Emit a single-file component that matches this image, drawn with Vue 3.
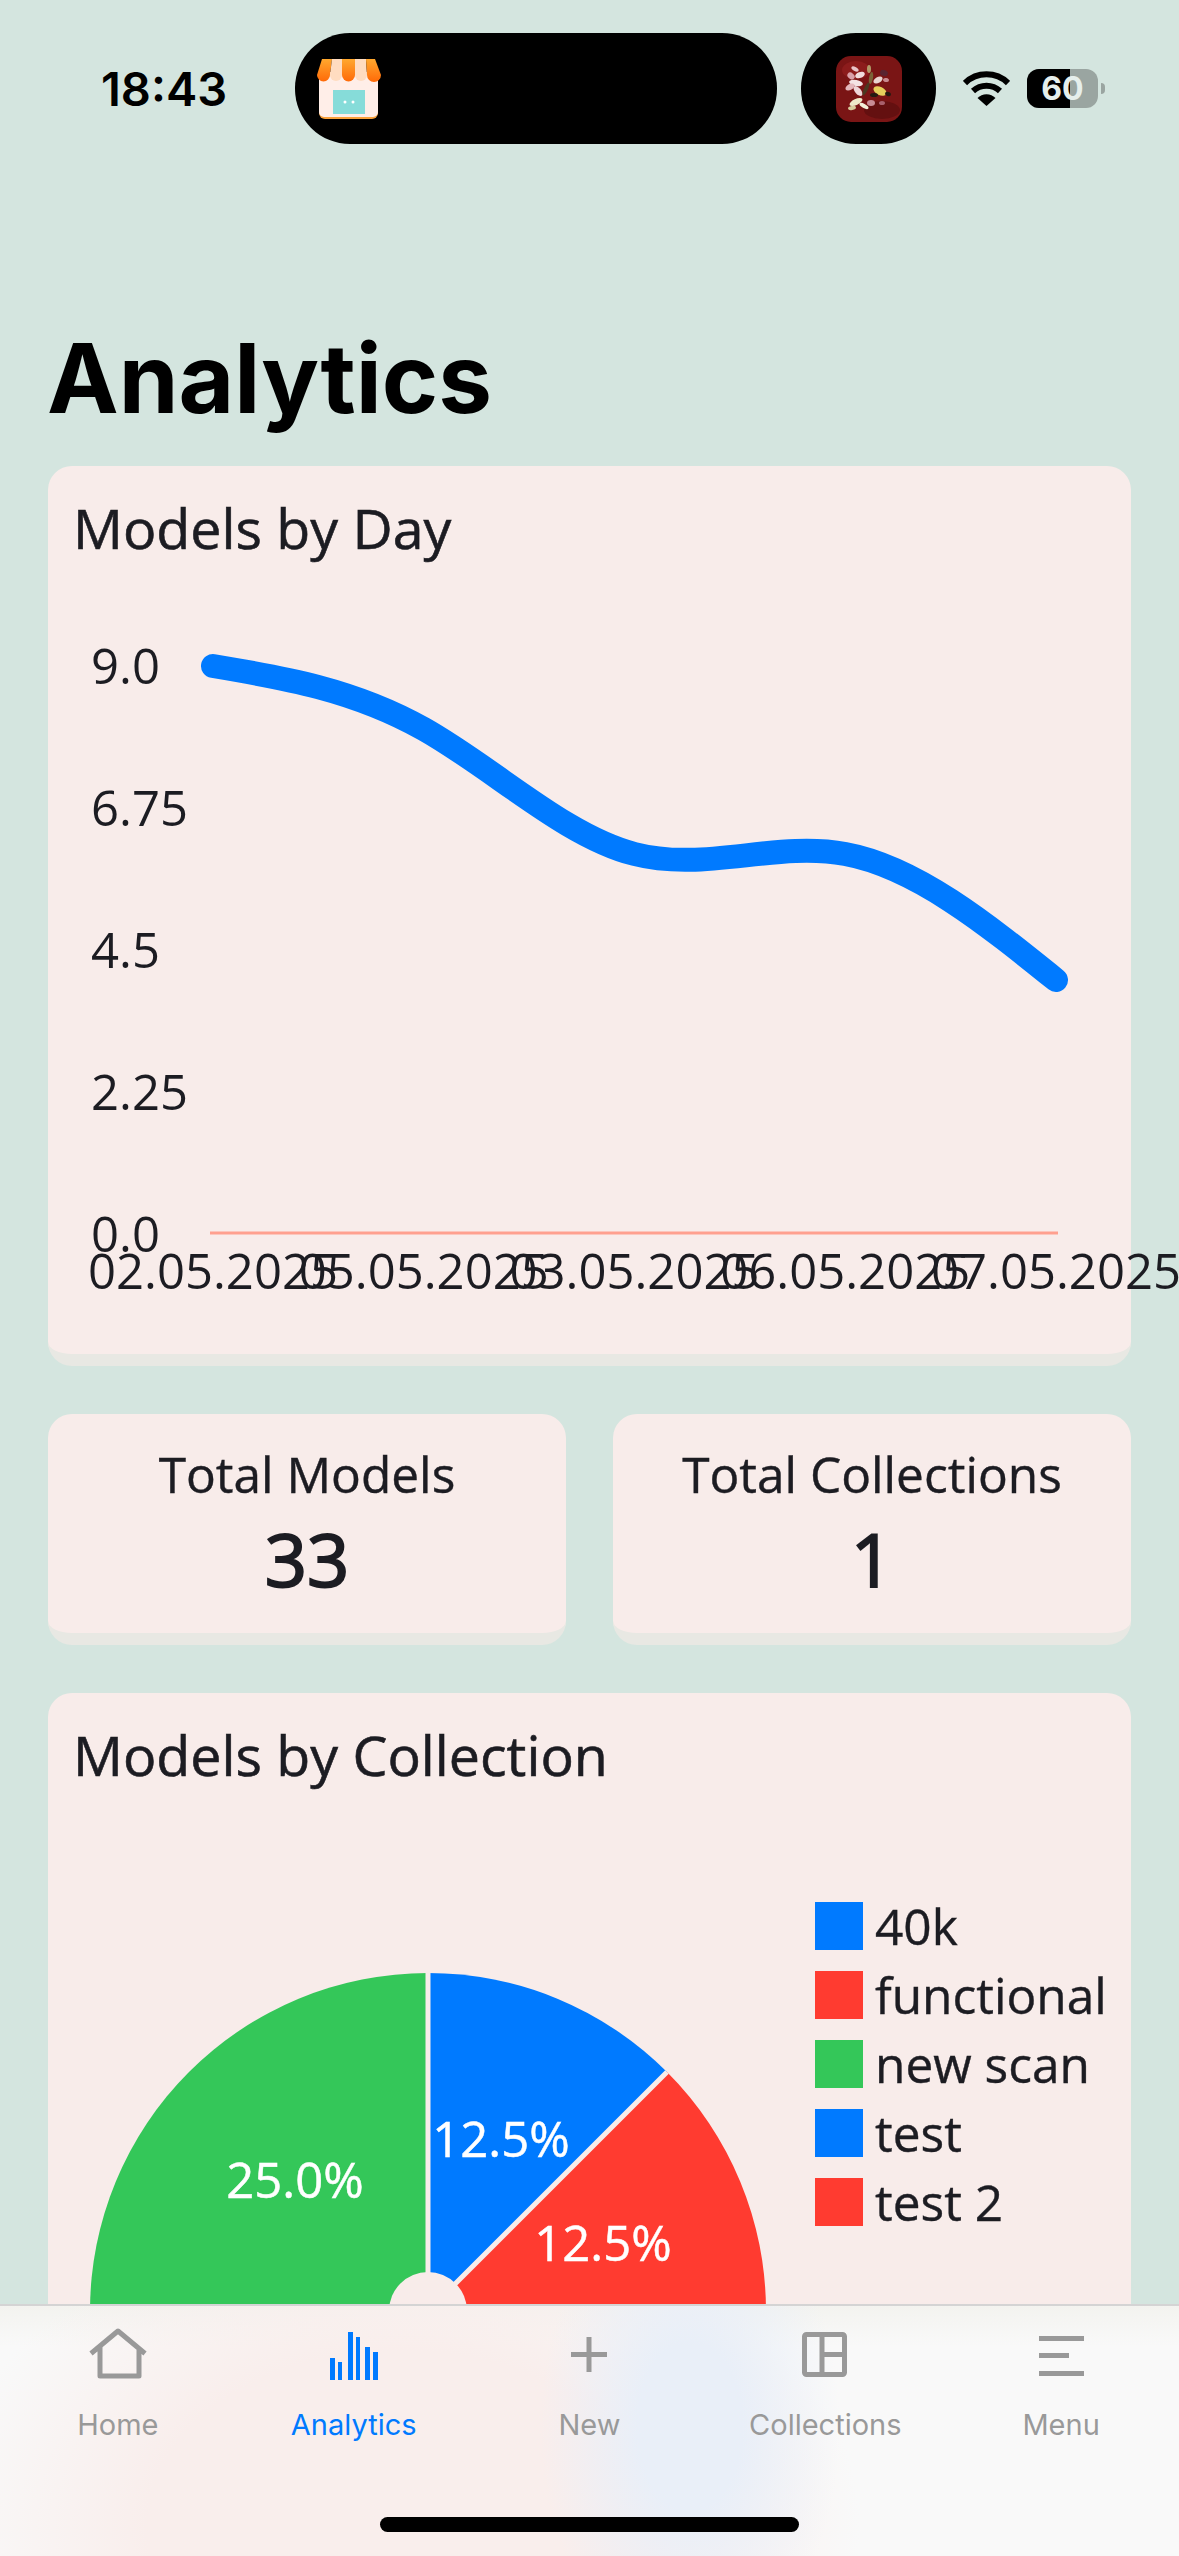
<template>
  <div class="screen">
    <div class="status-bar">
      <span class="time">18:43</span>
      <div class="island island-main">
        <svg class="shop-icon" width="65" height="62" viewBox="0 0 65 62">
          <defs>
            <linearGradient id="awning" x1="0" y1="0" x2="0" y2="1">
              <stop offset="0" stop-color="#ffa82e" />
              <stop offset="1" stop-color="#ff6a08" />
            </linearGradient>
          </defs>
          <rect x="3" y="14" width="59" height="47" rx="6" fill="#f9a13a" />
          <rect x="3" y="14" width="59" height="45" rx="5" fill="#ffeee8" />
          <rect x="17" y="32" width="32" height="24" fill="#86dcd9" />
          <circle cx="29" cy="44" r="1.500" fill="#fff" />
          <circle cx="37" cy="44" r="1.500" fill="#fff" />
          <path d="M6 1H16L14 17A6.500 6.500 0 0 1 1 17z" fill="url(#awning)" />
          <path d="M16 1H26V17A6 6 0 0 1 14 17z" fill="#ffdcc0" />
          <path d="M26 1H39V17A6.500 6.500 0 0 1 26 17z" fill="url(#awning)" />
          <path d="M39 1H50L51 17A6 6 0 0 1 39 17z" fill="#ffdcc0" />
          <path d="M50 1H59L65 17A7 7 0 0 1 51 17z" fill="url(#awning)" />
        </svg>
      </div>
      <div class="island island-side">
        <svg class="album-art" width="66" height="66" viewBox="0 0 66 66">
          <rect width="66" height="66" rx="15" fill="#7a1515" />
          <ellipse cx="20" cy="14" rx="14" ry="9" fill="#8c1c1c" />
          <ellipse cx="46" cy="54" rx="18" ry="9" fill="#641010" />
          <ellipse v-for="(f, i) in petals" :key="i" :cx="f[0]" :cy="f[1]" :rx="f[2]" :ry="f[3]" :fill="f[4]" :transform="`rotate(${f[5]} ${f[0]} ${f[1]})`" />
        </svg>
      </div>
      <svg class="wifi" width="47" height="35" viewBox="0 0 47 35">
        <path d="M2 12a31 31 0 0 1 43 0" fill="none" stroke="#000" stroke-width="6" />
        <path d="M10 20a20 20 0 0 1 27 0" fill="none" stroke="#000" stroke-width="6" />
        <path d="M14.500 27a12.500 12.500 0 0 1 18 0L23.500 35z" fill="#000" />
      </svg>
      <div class="battery">
        <div class="battery-fill"></div>
        <span class="battery-text">60</span>
      </div>
      <div class="battery-tip"></div>
    </div>

    <main class="content">
      <h1 class="page-title">Analytics</h1>

      <section class="card chart-card">
        <h2 class="card-title">Models by Day</h2>
        <svg class="line-chart" width="1083" height="720" viewBox="48 600 1083 720">
          <text v-for="t in yTicks" :key="t.label" x="91" :y="t.y" class="chart-text">{{ t.label }}</text>
          <text v-for="(d, i) in days" :key="d" :x="213 + i * 210.75" y="1289" text-anchor="middle" class="chart-text">{{ d }}</text>
          <path d="M210 1233H1058" fill="none" stroke="#ffa08f" stroke-width="3" />
          <path :d="linePath" fill="none" stroke="#007aff" stroke-width="24" stroke-linecap="round" stroke-linejoin="round" />
        </svg>
      </section>

      <div class="stats">
        <section class="card stat-card">
          <div class="stat-label">Total Models</div>
          <div class="stat-value">33</div>
        </section>
        <section class="card stat-card">
          <div class="stat-label">Total Collections</div>
          <div class="stat-value">1</div>
        </section>
      </div>

      <section class="card pie-card">
        <h2 class="card-title">Models by Collection</h2>
        <div class="pie-row">
          <svg class="pie" width="767" height="760" viewBox="48 1880 767 760">
            <path d="M428 2312V1974A338 338 0 0 0 90 2312A338 338 0 0 0 428 2650z" fill="#34c759" />
            <path d="M428 2312V1974A338 338 0 0 1 667 2073z" fill="#007aff" />
            <path d="M428 2312L667 2073A338 338 0 0 1 766 2312L766 2400H428z" fill="#ff3b30" />
            <path d="M428 2312V1974M428 2312L667 2073" stroke="#f8ecea" stroke-width="5" />
            <circle cx="428" cy="2312" r="39" fill="#f8ecea" />
            <text x="295" y="2199" text-anchor="middle" class="pie-text">25.0%</text>
            <text x="501" y="2158" text-anchor="middle" class="pie-text">12.5%</text>
            <text x="603" y="2262" text-anchor="middle" class="pie-text">12.5%</text>
          </svg>
          <ul class="legend">
            <li v-for="item in legend" :key="item.name" class="legend-item">
              <span class="legend-swatch" :style="{ backgroundColor: item.color }"></span>
              {{ item.name }}
            </li>
          </ul>
        </div>
      </section>
    </main>

    <nav class="tab-bar">
      <div v-for="tab in tabs" :key="tab.name" :class="['tab', { 'tab--active': tab.active }]">
        <svg class="tab-icon" width="60" height="54" viewBox="0 0 60 54">
          <template v-if="tab.name === 'Home'">
            <path d="M2 24.500L29 2l27 22.500M11 18v29h39V18" fill="none" stroke="currentColor" stroke-width="5" stroke-linejoin="round" transform="translate(1 1)" />
          </template>
          <template v-else-if="tab.name === 'Analytics'">
            <rect v-for="b in bars" :key="b.x" :x="b.x" :y="b.y" :width="b.w" :height="52 - b.y" fill="currentColor" />
          </template>
          <template v-else-if="tab.name === 'New'">
            <path d="M30 9V44M12 26.500H48" stroke="currentColor" stroke-width="5" />
          </template>
          <template v-else-if="tab.name === 'Collections'">
            <rect x="9.500" y="6.500" width="40" height="40" rx="2" fill="none" stroke="currentColor" stroke-width="5" />
            <path d="M27 6V47M27 26.500H50" stroke="currentColor" stroke-width="5" />
          </template>
          <template v-else>
            <path d="M8 10.500H53M8 27.500H38M8 45.500H53" stroke="currentColor" stroke-width="5" />
          </template>
        </svg>
        <span class="tab-label">{{ tab.name }}</span>
      </div>
      <div class="home-indicator"></div>
    </nav>
  </div>
</template>

<script setup>
import { computed } from 'vue'

const days = ['02.05.2025', '05.05.2025', '03.05.2025', '06.05.2025', '07.05.2025']

const yTicks = [
  { label: '9.0', y: 684 },
  { label: '6.75', y: 826 },
  { label: '4.5', y: 968 },
  { label: '2.25', y: 1110 },
  { label: '0.0', y: 1252 }
]

const legend = [
  { name: '40k', color: '#007aff' },
  { name: 'functional', color: '#ff3b30' },
  { name: 'new scan', color: '#34c759' },
  { name: 'test', color: '#007aff' },
  { name: 'test 2', color: '#ff3b30' }
]

const tabs = [
  { name: 'Home' },
  { name: 'Analytics', active: true },
  { name: 'New' },
  { name: 'Collections' },
  { name: 'Menu' }
]

const bars = [
  { x: 6, y: 30, w: 5 },
  { x: 14, y: 34, w: 4 },
  { x: 24, y: 4, w: 5 },
  { x: 32, y: 9, w: 4 },
  { x: 41, y: 19, w: 5 },
  { x: 49, y: 24, w: 5 }
]

// Rough bouquet on the album cover: cx, cy, rx, ry, colour, rotation
const petals = [
  [19, 13, 4, 2, '#e8c4c8', 30], [24, 19, 5, 3, '#f0dcdc', -20], [15, 20, 4, 3, '#d9a0a8', 40],
  [20, 27, 7, 3, '#f4e4e4', 10], [14, 31, 5, 3, '#e4b8bc', -30], [22, 35, 6, 3, '#efd6d8', 50],
  [33, 13, 2, 4, '#b09a68', 0], [35, 22, 2, 6, '#7a6338', 10], [30, 33, 2, 7, '#4a3a22', 25],
  [48, 17, 4, 3, '#5a2430', 20], [42, 24, 5, 3, '#e8d4d0', -30], [50, 24, 3, 2, '#c88a90', 10],
  [44, 35, 7, 4, '#e6cf5c', 25], [38, 39, 4, 2, '#241a12', 0], [52, 38, 3, 2, '#241a12', 20],
  [20, 46, 7, 3, '#efe8c8', -25], [28, 50, 5, 2, '#f4f0d8', 30], [16, 52, 4, 2, '#d8cc9c', -10],
  [35, 47, 4, 3, '#c88c94', 0], [46, 47, 3, 2, '#a8606c', 0]
]

// Natural cubic spline through the daily counts
const linePath = computed(() => {
  const pts = [[213, 666], [423.75, 729], [634.5, 854], [845.25, 854], [1056, 980]]
  const n = pts.length - 1
  const h = pts[1][0] - pts[0][0]
  const m = new Array(n + 1).fill(0)
  const c = new Array(n + 1).fill(0)
  const e = new Array(n + 1).fill(0)
  for (let i = 1; i < n; i++) {
    const rhs = (6 * (pts[i + 1][1] - 2 * pts[i][1] + pts[i - 1][1])) / (h * h)
    const w = 4 - c[i - 1]
    c[i] = 1 / w
    e[i] = (rhs - e[i - 1]) / w
  }
  for (let i = n - 1; i > 0; i--) {
    m[i] = e[i] - c[i] * m[i + 1]
  }
  let d = `M${pts[0][0]} ${pts[0][1]}`
  for (let i = 0; i < n; i++) {
    const [x0, y0] = pts[i]
    const [x1, y1] = pts[i + 1]
    const cy1 = y0 + (y1 - y0) / 3 - (h * h * (2 * m[i] + m[i + 1])) / 18
    const cy2 = y1 - (y1 - y0) / 3 - (h * h * (m[i] + 2 * m[i + 1])) / 18
    d += ` C${x0 + h / 3} ${cy1} ${x1 - h / 3} ${cy2} ${x1} ${y1}`
  }
  return d
})
</script>

<style>
html, body {
  margin: 0;
  background: #d4e5df;
}
</style>

<style scoped>
.screen {
  position: relative;
  width: 1179px;
  height: 2556px;
  overflow: hidden;
  background: #d4e5df;
  font-family: 'Open Sans', sans-serif;
  color: #1c1c22;
}

.status-bar {
  display: flex;
  align-items: center;
  height: 111px;
  padding: 33px 0 0 101px;
}

.time {
  width: 194px;
  font-family: Inter, sans-serif;
  font-size: 47px;
  font-weight: 600;
  color: #000;
}

.island {
  display: flex;
  align-items: center;
  height: 111px;
  background: #000;
  border-radius: 55px;
}

.island-main {
  width: 482px;
}

.shop-icon {
  margin-left: 21px;
}

.island-side {
  justify-content: center;
  width: 135px;
  margin-left: 24px;
}

.wifi {
  margin-left: 27px;
}

.battery {
  position: relative;
  width: 71px;
  height: 39px;
  margin-left: 17px;
  overflow: hidden;
  background: #9aa5a1;
  border-radius: 12px;
}

.battery-fill {
  width: 43px;
  height: 100%;
  background: #000;
}

.battery-text {
  position: absolute;
  inset: 0;
  text-align: center;
  font-family: Inter, sans-serif;
  font-size: 32px;
  font-weight: 700;
  line-height: 39px;
  color: #e6efec;
}

.battery-tip {
  width: 4px;
  height: 11px;
  margin-left: 3px;
  background: #9aa5a1;
  border-radius: 0 4px 4px 0;
}

.content {
  display: flex;
  flex-direction: column;
  gap: 48px;
  padding: 0 48px;
}

.page-title {
  margin: 173px 0 -21px -1px;
  font-family: Inter, sans-serif;
  font-size: 96px;
  font-weight: 700;
  line-height: 122px;
  color: #000;
}

.card {
  box-sizing: border-box;
  background: #f8ecea;
  border-bottom: 12px solid #e8e8e3;
  border-radius: 24px;
}

.card-title {
  margin: 0;
  padding: 24px 25px 0;
  font-size: 55.5px;
  font-weight: 400;
  line-height: 75px;
  -webkit-text-stroke: 0.6px #1c1c22;
}

.chart-card {
  height: 900px;
}

.line-chart {
  display: block;
  overflow: visible;
  margin-top: 35px;
}

.chart-text {
  font-size: 49px;
  fill: #1c1c22;
}

.stats {
  display: flex;
  gap: 47px;
}

.stat-card {
  flex: 1;
  height: 231px;
  padding-top: 27px;
  text-align: center;
}

.stat-label {
  font-size: 49.6px;
  line-height: 66px;
  -webkit-text-stroke: 0.4px #1c1c22;
}

.stat-value {
  margin-top: 7px;
  font-size: 74px;
  font-weight: 400;
  line-height: 90px;
  -webkit-text-stroke: 2px #1c1c22;
}

.pie-card {
  height: 900px;
}

.pie-row {
  display: flex;
  margin-top: 87px;
}

.pie {
  display: block;
  flex: none;
}

.pie-text {
  font-size: 49px;
  fill: #fff;
  stroke: #fff;
  stroke-width: 0.5px;
}

.legend {
  display: flex;
  flex-direction: column;
  gap: 5px;
  margin: 15px 0 0;
  padding: 0;
  list-style: none;
}

.legend-item {
  display: flex;
  align-items: center;
  gap: 12px;
  height: 64px;
  font-size: 49.6px;
  white-space: nowrap;
  -webkit-text-stroke: 0.4px #1c1c22;
}

.legend-swatch {
  width: 48px;
  height: 48px;
}

.tab-bar {
  position: absolute;
  left: 0;
  right: 0;
  bottom: 0;
  display: flex;
  height: 252px;
  box-sizing: border-box;
  border-top: 2px solid #d4d4d4;
  background:
    radial-gradient(ellipse 150px 240px at 690px 120px, #e9eff8 35%, rgba(233, 239, 248, 0) 100%),
    radial-gradient(ellipse 460px 320px at 400px 220px, #f9eeec 55%, rgba(249, 238, 236, 0) 100%),
    linear-gradient(180deg, #f3f3ef 0, #f9f9f9 40px);
}

.tab {
  display: flex;
  flex-direction: column;
  align-items: center;
  width: 236px;
  padding-top: 22px;
  color: #999;
}

.tab--active {
  color: #007aff;
}

.tab-icon {
  display: block;
}

.tab-label {
  margin-top: 24px;
  font-family: Inter, sans-serif;
  font-size: 29px;
  line-height: 38px;
}

.home-indicator {
  position: absolute;
  left: 380px;
  bottom: 24px;
  width: 419px;
  height: 15px;
  background: #000;
  border-radius: 8px;
}
</style>
